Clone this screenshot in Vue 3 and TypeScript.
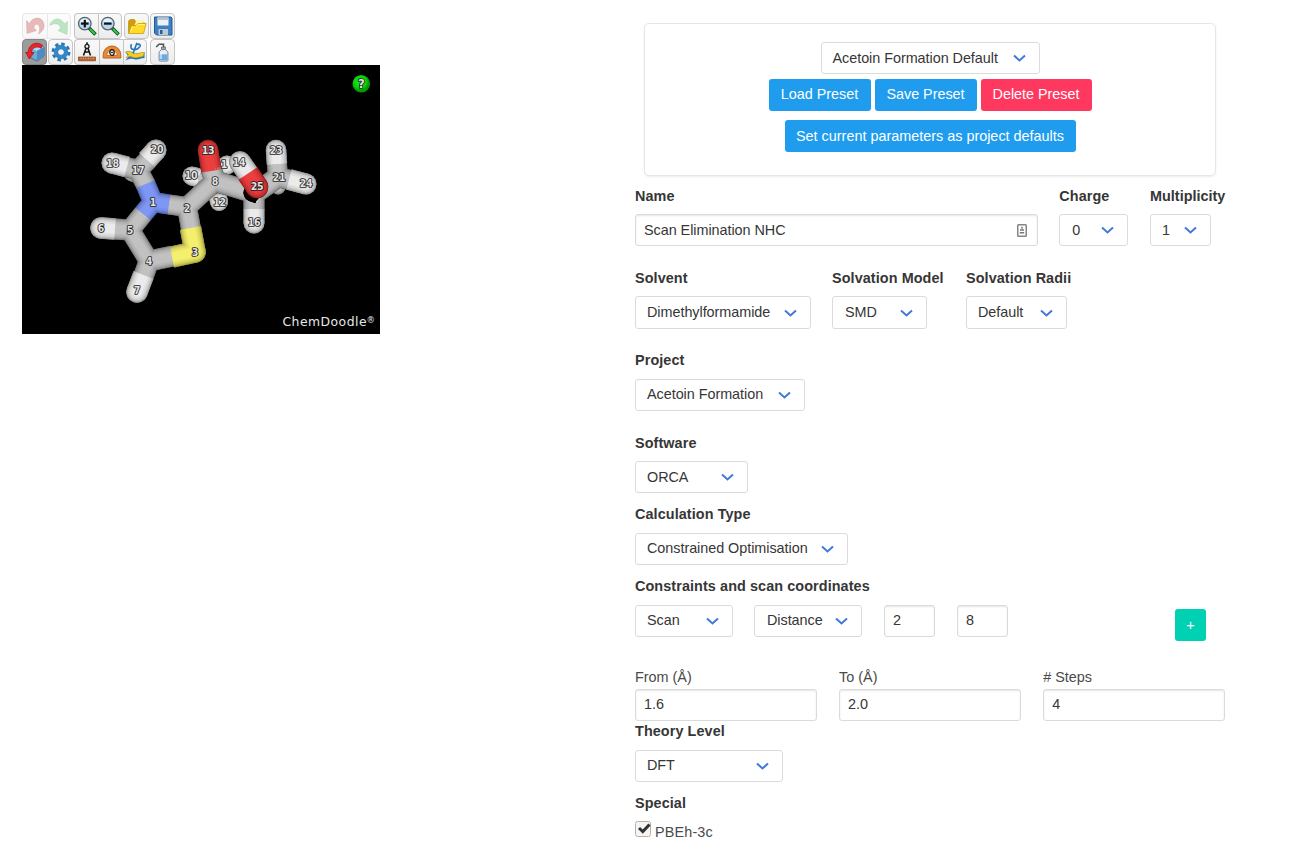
<script setup lang="ts">
interface Tool { icon: string; width: number; gap?: number; pos?: string; state?: string }
interface AtomLabel { text: string; x: number; y: number }
/* element, atom x, atom y, bond end x, bond end y, thickness */
type Segment = [string, number, number, number, number, number]
interface Stroke { key: string; path: string; cx: number; cy: number; width: number; color: string }

const toolRows: Tool[][] = [
  [
    { icon: 'undo', width: 25, pos: 'first', state: 'disabled' },
    { icon: 'redo', width: 24, pos: 'last', state: 'disabled' },
    { icon: 'zoomin', width: 24, gap: 3, pos: 'first' },
    { icon: 'zoomout', width: 24, pos: 'last' },
    { icon: 'open', width: 25, gap: 2 },
    { icon: 'save', width: 25, gap: 1 },
  ],
  [
    { icon: 'rotate', width: 25, state: 'active' },
    { icon: 'gear', width: 25, gap: 1 },
    { icon: 'compass', width: 25, gap: 1, pos: 'first' },
    { icon: 'protractor', width: 24, pos: 'middle' },
    { icon: 'torsion', width: 24, pos: 'last' },
    { icon: 'bottle', width: 25, gap: 3 },
  ],
]

const shades: Record<string, [number[], number[]]> = {
  H: [[105, 105, 105], [246, 246, 246]],
  C: [[82, 82, 82], [202, 202, 202]],
  N: [[52, 68, 125], [132, 158, 255]],
  O: [[112, 22, 22], [245, 65, 65]],
  S: [[112, 108, 40], [255, 250, 115]],
  K: [[6, 0, 0], [10, 2, 2]],
}

const layers: Segment[][] = [
  [
    ['C', 131, 174, 136, 176, 14],
    ['H', 192, 176, 199, 178, 19],
    ['C', 201, 178, 210, 180, 15],
    ['H', 227, 165, 230, 167, 19],
    ['H', 219, 202, 218, 197, 18],
    ['C', 278, 187, 277, 182, 15],
  ],
  [
    ['C', 138, 170, 146, 185, 20],
    ['C', 138, 170, 126, 167, 20],
    ['H', 112, 163, 127, 167, 21],
    ['C', 138, 170, 148, 160, 20],
    ['H', 156, 150, 147, 160, 21],
    ['N', 153, 202, 145.5, 184, 20],
    ['N', 153, 202, 143, 214, 20],
    ['N', 153, 202, 169, 204.5, 20],
    ['C', 130, 230, 143, 214, 20],
    ['C', 187, 207, 169, 204.5, 20],
    ['C', 187, 207, 215, 181, 20],
    ['C', 130, 230, 115, 229, 21],
    ['H', 101, 228, 115, 229, 21.5],
    ['C', 130, 230, 149, 261, 20],
    ['C', 149, 261, 173, 256, 21],
    ['C', 187, 207, 191, 229, 20],
    ['S', 195, 252, 190.5, 228, 21.5],
    ['S', 195, 252, 172, 257, 21.5],
    ['C', 149, 261, 143.5, 276, 20.5],
    ['H', 137, 292, 143.5, 275, 21.5],
    ['C', 215, 181, 254, 193, 21],
    ['C', 278, 177, 254, 194, 21],
    ['C', 254, 193, 254, 210, 21],
    ['H', 254, 223, 254, 209, 21],
    ['C', 215, 181, 211, 169, 21],
    ['O', 208, 150, 211.5, 171, 20.5],
    ['C', 278, 177, 277, 164, 20],
    ['H', 276, 150, 277, 164, 20.5],
    ['C', 278, 177, 290, 180, 20],
    ['H', 306, 184, 289, 179.5, 21],
  ],
  [
    ['K', 252, 193, 258, 195, 17],
  ],
  [
    ['H', 240, 162, 248.5, 174, 21.5],
    ['O', 257, 187, 248, 173.5, 22.5],
  ],
]

const passes = 10
function shadeLayer(layer: Segment[], layerIndex: number): Stroke[] {
  const strokes: Stroke[] = []
  for (let pass = 0; pass < passes; pass++) {
    const t = pass / passes
    layer.forEach(([element, ax, ay, bx, by, thickness], index) => {
      const [dark, light] = shades[element]
      const mix = Math.pow(t, 0.75)
      const rgb = dark.map((value, c) => Math.round(value + (light[c] - value) * mix))
      strokes.push({
        key: `${layerIndex}-${pass}-${index}`,
        path: `M${ax - 22} ${ay - 65}L${bx - 22} ${by - 65}`,
        cx: ax - 22,
        cy: ay - 65,
        width: thickness * Math.sqrt(1 - t * t),
        color: `rgb(${rgb.join(',')})`,
      })
    })
  }
  return strokes
}
const shadedLayers = layers.map(shadeLayer)
const rearStrokes = [...shadedLayers[0], ...shadedLayers[1], ...shadedLayers[2]]
const frontStrokes = shadedLayers[3]

const labels: AtomLabel[] = [
  { text: '20', x: 157, y: 149 }, { text: '18', x: 112.5, y: 163 }, { text: '17', x: 138, y: 170 },
  { text: '1', x: 153, y: 202 }, { text: '2', x: 187, y: 208 }, { text: '3', x: 195, y: 252 },
  { text: '4', x: 149, y: 261 }, { text: '5', x: 130, y: 230 }, { text: '6', x: 101, y: 228 },
  { text: '7', x: 137, y: 290 }, { text: '8', x: 215, y: 181 }, { text: '10', x: 191, y: 175 },
  { text: '12', x: 219.5, y: 202 }, { text: '13', x: 208, y: 150 }, { text: '14', x: 239, y: 162 },
  { text: '16', x: 254, y: 222 }, { text: '21', x: 279, y: 177 }, { text: '23', x: 276, y: 150 },
  { text: '24', x: 306, y: 183 }, { text: '25', x: 257, y: 186 },
]
</script>

<template>
  <main class="page">
    <section class="editor">
      <div v-for="(row, r) in toolRows" :key="r" class="toolbar">
        <div
          v-for="tool in row" :key="tool.icon"
          class="tool" :class="[tool.pos, tool.state]"
          :style="{ width: tool.width + 'px', marginLeft: (tool.gap ?? 0) + 'px' }"
        >
          <svg width="20" height="20" viewBox="0 0 20 20">
            <g v-if="tool.icon === 'undo'">
              <path d="M1.5 4.5 2 17.5 11.5 14.5 8.8 12C9.5 7.5 13.5 7 14.5 11 15 13.5 14.5 15.5 13.5 18 18.5 15 20 11 18.5 6.5 16 .5 8 .5 4.5 7.5Z" fill="#c45552" stroke="#963535" stroke-width=".6" />
            </g>
            <g v-else-if="tool.icon === 'redo'">
              <path d="M18.5 5.5 18 18.5 9 14.5 11.6 12.5C11 8 7 6 .8 9.3 3 2.5 11 0 15.5 7.8Z" fill="#57bd65" stroke="#36964a" stroke-width=".6" />
            </g>
            <g v-else-if="tool.icon === 'zoomin' || tool.icon === 'zoomout'">
              <path d="m12 12 6.5 6.5" stroke="#123d18" stroke-width="3.6" />
              <path d="m13 13 5 5" stroke="#2fc747" stroke-width="2.2" />
              <circle cx="7.8" cy="7.6" r="6.3" fill="#b8d8f3" stroke="#59636b" stroke-width="1.3" />
              <path d="M3 6a5 5 0 0 1 9.5 0Z" fill="#e4f4ff" />
              <path d="M4 7.6h7.6" stroke="#111" stroke-width="2.2" />
              <path v-if="tool.icon === 'zoomin'" d="M7.8 3.8v7.6" stroke="#111" stroke-width="2.2" />
            </g>
            <g v-else-if="tool.icon === 'open'">
              <path d="M1.5 17V5l1.5-1.5h4.5l1 2H16l1 1v3Z" fill="#d19b0a" stroke="#b58408" stroke-width=".6" />
              <path d="M9.5 4H17l-1 5H7.5Z" fill="#fff3b0" />
              <path d="m1.5 17.5 3-8h4.5l2-2h8.2l-2.7 10Z" fill="#ffdb27" stroke="#c99b0b" stroke-width=".8" />
              <path d="m5.5 10.5-2 5M9.5 10l2-1.5h6" stroke="#fff39a" fill="none" />
            </g>
            <g v-else-if="tool.icon === 'save'">
              <path d="M1.5 1h16.5l1 1v17H3.5l-2-2Z" fill="#3b80c2" stroke="#235b91" />
              <path d="M4.5 1.5h11v8h-11Z" fill="#eef2f6" />
              <path d="M4.5 1.5h11V4h-11Z" fill="#b7c4d0" />
              <path d="M5.5 13h9.5v6H5.5Z" fill="#c1c8cf" />
              <path d="M7 14h2.5v4H7Z" fill="#285c92" />
            </g>
            <g v-else-if="tool.icon === 'rotate'">
              <path d="m5 6 6-4 8 3v9l-7 5-8-4Z" fill="#6dabd8" stroke="#315f91" stroke-width=".8" />
              <path d="m5 6 7 3 7-4-8-3Z" fill="#add9f4" />
              <path d="m12 9 7-4v9l-7 5Z" fill="#4e8dc2" />
              <path d="M17.5 3.3C11-1.5 3.5 2.5 3.2 10.3H.7L4.3 17 9 10.5H6.2C6.8 5.7 12 3.5 16.2 6.2Z" fill="#ee2426" stroke="#9d1016" stroke-width=".7" />
            </g>
            <g v-else-if="tool.icon === 'gear'">
              <circle cx="10" cy="10" r="7.8" fill="none" stroke="#2776b4" stroke-width="3.2" stroke-dasharray="3.4 2.726" />
              <circle cx="10" cy="10" r="4.9" fill="none" stroke="#3488c5" stroke-width="4.6" />
              <circle cx="10" cy="10" r="2.6" fill="#f3f3f3" />
            </g>
            <g v-else-if="tool.icon === 'compass'">
              <path d="M1.5 15h17v3.8h-17Z" fill="#b96831" stroke="#81401c" stroke-width=".7" />
              <path d="M4 15.5V17M6.5 15.5V17M9 15.5V17M11.5 15.5V17M14 15.5V17M16.5 15.5V17" stroke="#f1b586" stroke-width=".7" />
              <path d="m9.5 5-3 8.5M10.5 5l3 8.5M8 10h4.5M10 .2V3" fill="none" stroke="#171717" stroke-width="1.6" />
              <circle cx="10" cy="4.4" r="2" fill="#eee" stroke="#171717" stroke-width="1.3" />
            </g>
            <g v-else-if="tool.icon === 'protractor'">
              <path d="M1.2 16v-3.2a8.8 8.8 0 0 1 17.6 0V16Z" fill="#e98a36" stroke="#b4632a" />
              <path d="M4.8 13.5a5.2 5.2 0 0 1 10.4 0Z" fill="#faf0e7" stroke="#b55c1d" stroke-width=".7" />
              <ellipse cx="10" cy="10.4" rx="2.2" ry="2.9" fill="none" stroke="#17120c" stroke-width="1.2" />
              <path d="M8.7 10.4h2.6" stroke="#17120c" />
            </g>
            <g v-else-if="tool.icon === 'torsion'">
              <path d="M.5 10c4-2 7 1 10 1.5 3 .5 5-1.5 9-1V16c-4 0-6 2-9 1.5-3-.5-5-2-10 1l3-4Z" fill="#2473bd" />
              <path d="M.5 10c4-2 7 1 10 1.5 3 .5 5-1.5 9-1l-1.5 4c-4 0-6 2-9 1C6 15 5 13.5 1 16l2.5-3.5Z" fill="#f6ce21" stroke="#c49914" stroke-width=".6" />
              <path d="M8 11.5 12 .8M6.5 2.2c-3 6 5 7.5 8.5 2.2 1-2-1-3-2.5-1.5" fill="none" stroke="#2575bd" stroke-width="1.6" />
            </g>
            <g v-else>
              <path d="M10.5 6V2.2H6L3.2 5" fill="none" stroke="#4a5157" stroke-width="1.5" />
              <path d="M8.5 5h4v3h-4Z" fill="#aaa" stroke="#555" stroke-width=".7" />
              <path d="m8.5 7.5-2.4 2.6v8q0 1 1 1h6.8q1 0 1-1v-8l-2.4-2.6Z" fill="#e5eef7" stroke="#66717a" stroke-width=".8" />
              <path d="M6.6 12.3h7.8v6H6.6Z" fill="#6aa9e4" />
              <path d="M8 10.5V17" stroke="#fff" />
            </g>
          </svg>
        </div>
      </div>

      <svg class="molecule" width="358" height="269" viewBox="0 0 358 269">
        <defs>
          <radialGradient id="helpFill" cx=".42" cy=".4">
            <stop offset="0" stop-color="#18f518" /><stop offset=".7" stop-color="#05d605" /><stop offset="1" stop-color="#009d00" />
          </radialGradient>
        </defs>
        <rect width="358" height="269" fill="#000" />
        <g v-for="s in rearStrokes" :key="s.key">
          <circle :cx="s.cx" :cy="s.cy" :r="s.width / 2" :fill="s.color" />
          <path :d="s.path" :stroke="s.color" :stroke-width="s.width" />
        </g>
        <text class="atom" x="202" y="103">1</text>
        <g v-for="s in frontStrokes" :key="s.key">
          <circle :cx="s.cx" :cy="s.cy" :r="s.width / 2" :fill="s.color" />
          <path :d="s.path" :stroke="s.color" :stroke-width="s.width" />
        </g>
        <text v-for="a in labels" :key="a.text" class="atom" :x="a.x - 22" :y="a.y - 61">{{ a.text }}</text>
        <circle cx="339.3" cy="18.7" r="8.8" fill="url(#helpFill)" />
        <text class="atom help" x="339.3" y="22.7">?</text>
        <text class="brand" x="260.5" y="261" textLength="84" lengthAdjust="spacing">ChemDoodle</text>
        <text class="brand mark" x="344.5" y="257.5">®</text>
      </svg>
    </section>

    <section class="form">
      <div class="preset-box">
        <div class="select preset">Acetoin Formation Default<svg class="chevron" viewBox="0 0 13 9"><path d="m1 1.5 5.5 5 5.5-5" /></svg></div>
        <div class="buttons">
          <button class="load">Load Preset</button>
          <button class="save">Save Preset</button>
          <button class="danger">Delete Preset</button>
        </div>
        <button class="defaults">Set current parameters as project defaults</button>
      </div>

      <div class="row wide low">
        <div class="field name"><label>Name</label>
          <div class="input">Scan Elimination NHC
            <svg class="contact" width="10" height="13" viewBox="0 0 10 13"><rect x=".75" y=".75" width="8.5" height="11.5" rx=".8" fill="#fff" stroke="#858585" stroke-width="1.5" /><path d="M5 2.7v2M3 6h4M2.8 8.7h4.4" stroke="#777" stroke-width="1.5" /></svg>
          </div>
        </div>
        <div class="field charge"><label>Charge</label><div class="select">0<svg class="chevron" viewBox="0 0 13 9"><path d="m1 1.5 5.5 5 5.5-5" /></svg></div></div>
        <div class="field multiplicity"><label>Multiplicity</label><div class="select">1<svg class="chevron" viewBox="0 0 13 9"><path d="m1 1.5 5.5 5 5.5-5" /></svg></div></div>
      </div>
      <div class="row wide">
        <div class="field solvent"><label>Solvent</label><div class="select">Dimethylformamide<svg class="chevron" viewBox="0 0 13 9"><path d="m1 1.5 5.5 5 5.5-5" /></svg></div></div>
        <div class="field model"><label>Solvation Model</label><div class="select">SMD<svg class="chevron" viewBox="0 0 13 9"><path d="m1 1.5 5.5 5 5.5-5" /></svg></div></div>
        <div class="field radii"><label>Solvation Radii</label><div class="select">Default<svg class="chevron" viewBox="0 0 13 9"><path d="m1 1.5 5.5 5 5.5-5" /></svg></div></div>
      </div>
      <div class="row wide">
        <div class="field project"><label>Project</label><div class="select">Acetoin Formation<svg class="chevron" viewBox="0 0 13 9"><path d="m1 1.5 5.5 5 5.5-5" /></svg></div></div>
      </div>
      <div class="row low">
        <div class="field software"><label>Software</label><div class="select">ORCA<svg class="chevron" viewBox="0 0 13 9"><path d="m1 1.5 5.5 5 5.5-5" /></svg></div></div>
      </div>
      <div class="row">
        <div class="field calculation"><label>Calculation Type</label><div class="select">Constrained Optimisation<svg class="chevron" viewBox="0 0 13 9"><path d="m1 1.5 5.5 5 5.5-5" /></svg></div></div>
      </div>
      <div class="constraints">
        <label>Constraints and scan coordinates</label>
        <div class="constraint-row">
          <div class="select scan">Scan<svg class="chevron" viewBox="0 0 13 9"><path d="m1 1.5 5.5 5 5.5-5" /></svg></div>
          <div class="select distance">Distance<svg class="chevron" viewBox="0 0 13 9"><path d="m1 1.5 5.5 5 5.5-5" /></svg></div>
          <div class="input atom-input">2</div>
          <div class="input atom-input">8</div>
          <button class="add">+</button>
        </div>
      </div>
      <div class="range">
        <div><span>From (Å)</span><div class="input">1.6</div></div>
        <div><span>To (Å)</span><div class="input">2.0</div></div>
        <div><span># Steps</span><div class="input">4</div></div>
      </div>
      <div class="row">
        <div class="field theory"><label>Theory Level</label><div class="select">DFT<svg class="chevron" viewBox="0 0 13 9"><path d="m1 1.5 5.5 5 5.5-5" /></svg></div></div>
      </div>
      <label class="special">Special</label>
      <div class="check-row">
        <svg width="16" height="16" viewBox="0 0 16 16"><rect x=".5" y=".5" width="15" height="15" rx="2" fill="#f7f5f4" stroke="#b9b0a9" /><path d="m4 7 3.8 3.6L14.5 3.5" fill="none" stroke="#2e3436" stroke-width="3" /></svg>
        <span>PBEh-3c</span>
      </div>
    </section>
  </main>
</template>

<style>
body { margin: 0; background: #fff; overflow: hidden; }
</style>

<style scoped>
.page { display: flex; height: 861px; box-sizing: border-box; overflow: hidden; font: 14.4px/21.6px "Liberation Sans", Arial, sans-serif; color: #4a4a4a; }
.page * { box-sizing: border-box; }
.editor { width: 613px; padding: 13px 0 0 22px; flex: none; }
.toolbar { display: flex; height: 26px; }
.tool { height: 26px; display: flex; align-items: center; justify-content: center; border: 1px solid #c5c5c5; border-radius: 4px; background: linear-gradient(#f9f9f9, #ececec); }
.tool svg { flex: none; }
.tool.first { border-radius: 4px 0 0 4px; border-right: 0; }
.tool.last { border-radius: 0 4px 4px 0; }
.tool.middle { border-radius: 0; border-right: 0; }
.tool.disabled { opacity: .4; }
.tool.active { background: #9c9c9c; border-color: #858585; }
.molecule { display: block; }
.atom { font: bold 10.5px "DejaVu Sans Condensed", "DejaVu Sans", sans-serif; text-anchor: middle; fill: #e4e4e4; stroke: #1c1c1c; stroke-width: 1.7px; paint-order: stroke; stroke-linejoin: round; letter-spacing: -.3px; }
.help { font-size: 13px; }
.brand { font: 12.4px "DejaVu Sans", sans-serif; fill: #e8e8e8; }
.mark { font-size: 8.5px; }
.form { width: 591px; margin-left: 22px; padding-top: 23px; flex: none; }
.preset-box { width: 572px; height: 153px; margin: 0 0 9.3px 9px; border: 1px solid #e6e6e6; border-radius: 5px; box-shadow: 0 1px 2px rgba(10, 10, 10, .08); display: flex; flex-direction: column; align-items: center; padding-top: 18px; }
.select, .input { height: 32.4px; border: 1px solid #dbdbdb; border-radius: 3px; background: #fff; color: #363636; line-height: 21.6px; letter-spacing: -.04px; white-space: nowrap; padding: 4.3px 11px; display: flex; justify-content: space-between; }
.input { padding-left: 8px; box-shadow: inset 0 1px 2px rgba(10, 10, 10, .1); }
.chevron { width: 13px; height: 9px; margin: 7px 2px 0 0; flex: none; fill: none; stroke: #3f79dc; stroke-width: 2; }
.low .select, .low .input, .preset { padding-top: 5.3px; }
.low .chevron, .preset .chevron { margin-top: 6px; }
.low label { padding-top: 1px; }
.preset { width: 219px; }
.buttons { display: flex; gap: 4px; margin-top: 4.6px; }
button { height: 32.4px; border: 0; border-radius: 3px; padding: 0; background: #209cee; color: #fff; font: inherit; white-space: nowrap; }
.buttons button { padding-bottom: 1px; letter-spacing: -.02px; }
.load, .save { width: 102px; }
.danger { width: 111px; background: #ff3860; }
.defaults { width: 291px; margin-top: 8.6px; padding-top: 1px; }
.row { display: flex; gap: 21.3px; height: 72px; }
.row.wide { height: 82.3px; }
label { display: block; font-weight: 700; color: #363636; height: 21.6px; margin-bottom: 7.2px; white-space: nowrap; letter-spacing: .09px; }
.name { width: 403px; }
.contact { margin: 3.5px -1px 0 0; }
.charge { width: 69.5px; }
.charge .select { width: 69px; padding-left: 12px; }
.multiplicity label { letter-spacing: 0; }
.multiplicity .select { width: 61px; padding-left: 11px; }
.solvent { width: 175.7px; }
.model { width: 112.7px; }
.model .select { width: 95px; padding-left: 12px; }
.radii .select { width: 101px; }
.project { width: 170px; }
.software { width: 113px; }
.calculation { width: 213px; }
.constraints { height: 90px; }
.constraint-row { display: flex; padding-right: 20px; }
.scan { width: 98px; }
.distance { width: 108px; margin-left: 21px; padding-left: 12px; }
.atom-input { width: 51px; margin-left: 22px; }
.add { width: 31px; margin: 4px 0 0 auto; padding-top: 1px; background: #00d1b2; }
.range { display: grid; grid-template-columns: repeat(3, 182.3px); gap: 21.8px; height: 55px; }
.range span { display: block; height: 22.8px; padding-top: 1px; }
.theory { width: 148px; }
.special { margin-bottom: 7px; }
.check-row { display: flex; gap: 4px; }
.check-row svg { margin-top: -1px; }
.check-row span { letter-spacing: .15px; }
</style>
